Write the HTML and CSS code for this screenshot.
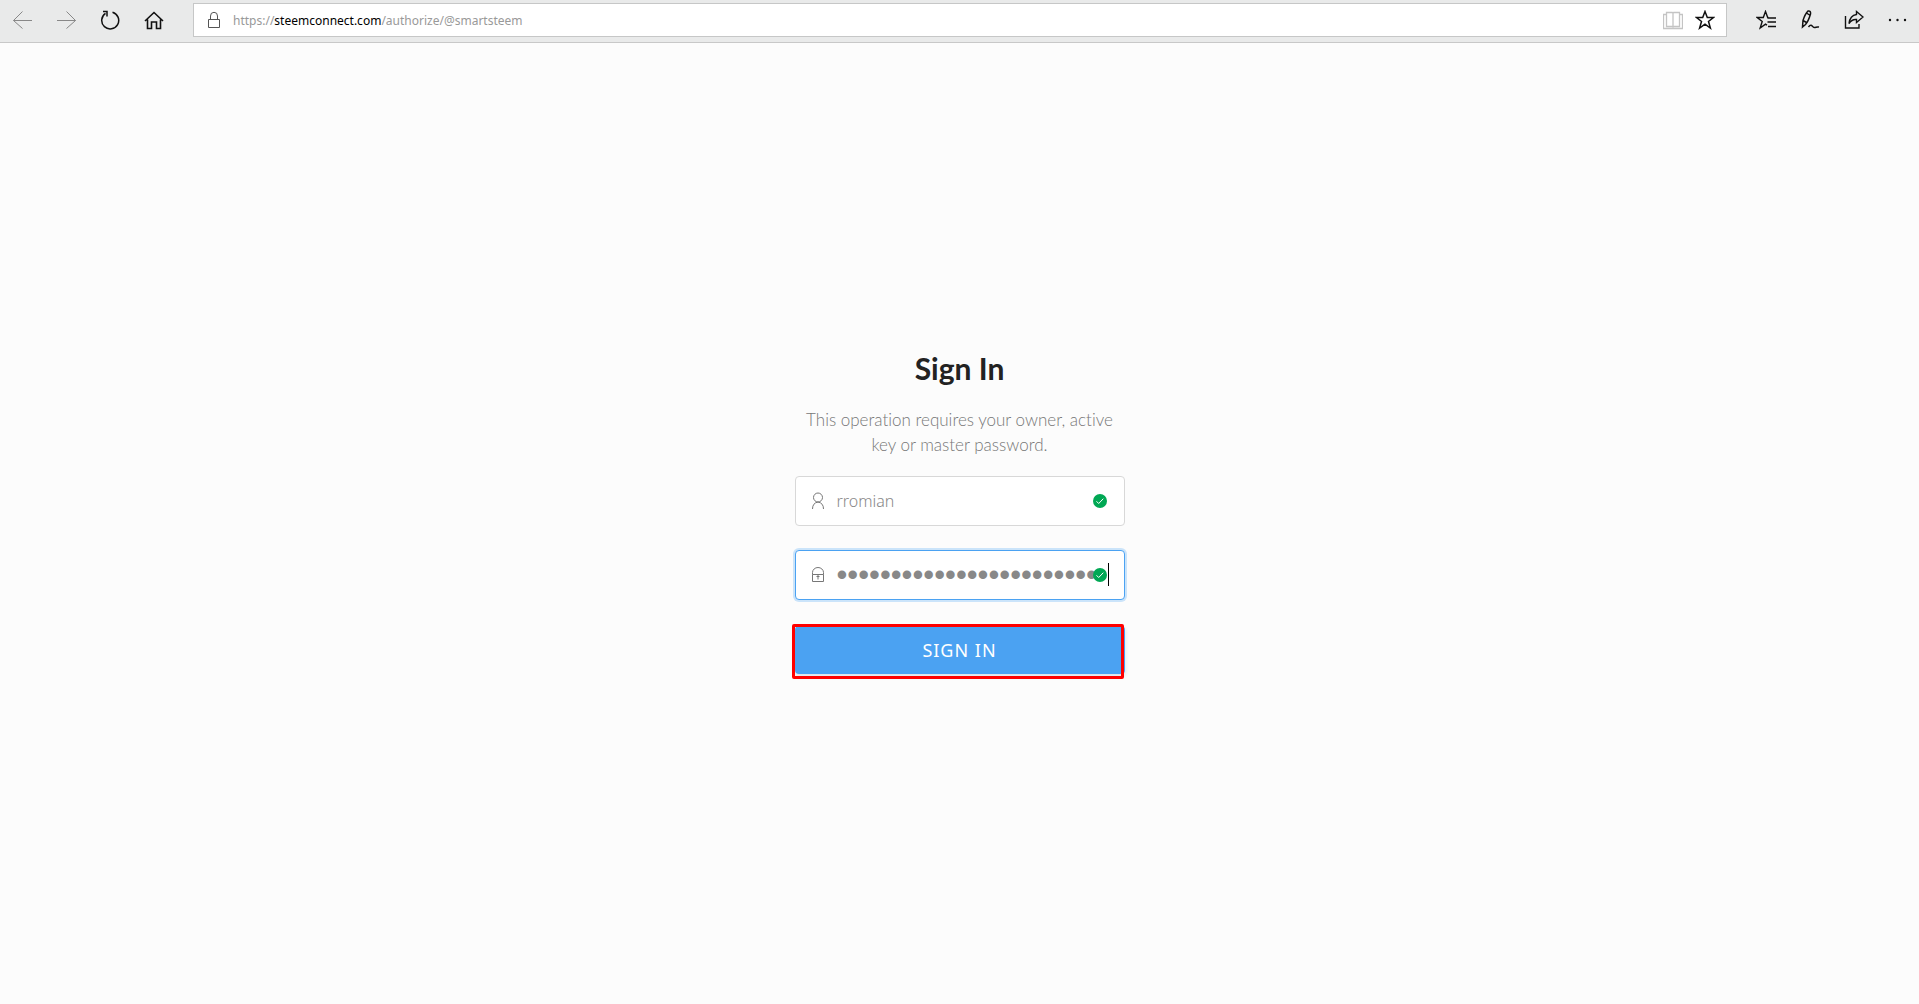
FILE: index.html
```html
<!DOCTYPE html>
<html lang="en">
<head>
    <meta charset="UTF-8">
    <meta name="viewport" content="width=device-width, initial-scale=1.0">
    <title>Sign In</title>
    <link rel="stylesheet" href="styles.css">
</head>
<body>
    <header class="toolbar">
        <nav class="nav-buttons">
            <button class="tool disabled" aria-label="Back">
                <svg viewBox="0 0 20 20"><path d="M20 10.5H1.5M10.5 1.5L1.5 10.5l9 8"/></svg>
            </button>
            <button class="tool disabled" aria-label="Forward">
                <svg viewBox="0 0 20 20"><path d="M1 10.5H19.5M10.5 1.5l9 9-9 8"/></svg>
            </button>
            <button class="tool" aria-label="Refresh">
                <svg viewBox="0 0 20 20"><path d="M12.5 2.2A8.5 8.5 0 1 1 5.5 3.3M3 1.5h4v5" stroke-width="1.5"/></svg>
            </button>
            <button class="tool" aria-label="Home">
                <svg viewBox="0 0 20 20"><path d="M1 11l9-8.5L19 11M3.5 9.5V18.5h4V12h5v6.5h4V9.5" stroke-width="1.6"/></svg>
            </button>
        </nav>

        <div class="address-bar">
            <svg class="address-lock" viewBox="0 0 14 18"><path d="M1.5 8.5h11v8h-11zM3.5 8.5V5a3.5 3.7 0 0 1 7 0v3.5"/></svg>
            <a class="url" href="#">https://<span class="domain">steemconnect.com</span>/authorize/@smartsteem</a>
            <button class="tool faded" aria-label="Reading view">
                <svg viewBox="0 0 20 20"><path d="M3.5 2.5h6q.5 0 .5 1q0-1 .5-1h6v14h-5.5q-1 0-1 1q0-1-1-1h-5.5zM10 3.5v14M3.5 4.5h-3v14h19v-14h-3" stroke-width="1.3"/></svg>
            </button>
            <button class="tool" aria-label="Add to favorites">
                <svg viewBox="0 0 20 20"><path d="M10 1.5l2.3 6h6.2l-5 4 1.9 6.5-5.4-3.9L4.6 18l1.9-6.5-5-4h6.2z" stroke-width="1.5"/></svg>
            </button>
        </div>

        <div class="menu-buttons">
            <button class="tool" aria-label="Favorites">
                <svg viewBox="0 0 20 20"><path d="M12.5 7.5h-.8L9.5 1.5l-2.2 6H1.2l5 4-2 6.5 5.3-3.9 1.5 1M11.5 8h8.5M11.5 12h8.5M12 16.5h8" stroke-width="1.4"/></svg>
            </button>
            <button class="tool" aria-label="Make a web note">
                <svg viewBox="0 0 20 20"><path d="M2.5 17L3 10.5Q5 4 8 1q3-.5 2.5 3Q8.5 11 5.5 14.5zM6.5 3l3 2M3 10.5l3.5 2M8.5 17c3-4 4 .5 6 .5 1.5 0 2-1 4.5-.5" stroke-width="1.5"/></svg>
            </button>
            <button class="tool" aria-label="Share">
                <svg viewBox="0 0 20 20"><path d="M1.5 6v12h13.5v-4M12.5 1.5L19 7l-6.5 5.5V9.5Q8 9 5 13.5 6 5.5 12.5 4.5z" stroke-width="1.4"/></svg>
            </button>
            <button class="tool" aria-label="More">
                <svg viewBox="0 0 20 20"><g class="dots"><circle cx="2" cy="10" r="1.2"/><circle cx="9.5" cy="10" r="1.2"/><circle cx="17" cy="10" r="1.2"/></g></svg>
            </button>
        </div>
    </header>

    <main>
        <form class="sign-in">
            <h1>Sign In</h1>
            <p>This operation requires your owner, active key or master password.</p>

            <div class="field">
                <svg class="field-icon" viewBox="0 0 14 18"><circle cx="7" cy="5.5" r="4.5"/><path d="M1.5 17q0-6 5.5-7 5.5 1 5.5 7"/></svg>
                <input type="text" aria-label="Username" value="rromian">
                <svg class="field-check" viewBox="0 0 14 14"><circle cx="7" cy="7" r="7"/><path d="M3.5 7.3l2.2 2.2 4.6-4.8"/></svg>
            </div>

            <div class="field focused">
                <svg class="field-icon" viewBox="0 0 14 18"><path d="M1.5 8.5h11v7h-11zM1.5 8.5V6.5a5.5 5 0 0 1 11 0v2M7 9v4.5M5.5 10.5h3"/></svg>
                <input type="password" aria-label="Password" value="abcdefghijklmnopqrstuvwx">
                <svg class="field-check" viewBox="0 0 14 14"><circle cx="7" cy="7" r="7"/><path d="M3.5 7.3l2.2 2.2 4.6-4.8"/></svg>
                <span class="caret"></span>
            </div>

            <div class="submit">
                <button type="submit">SIGN IN</button>
                <span class="highlight"></span>
            </div>
        </form>
    </main>
</body>
</html>
```
FILE: styles.css
```css
* {
    box-sizing: border-box;
}

body {
    margin: 0;
    min-height: 100vh;
    display: flex;
    flex-direction: column;
    background: #fcfcfc;
    font-family: "Noto Sans", sans-serif;
}

svg {
    fill: none;
    stroke: currentColor;
}

button {
    padding: 0;
    border: 0;
    cursor: pointer;
}

/* browser toolbar */
.toolbar {
    display: flex;
    align-items: flex-start;
    height: 43px;
    padding: 3px 11px 0 12px;
    background: #e9eaea;
    border-bottom: 1px solid #c8c8c8;
}

.nav-buttons,
.menu-buttons {
    display: flex;
    align-items: center;
    gap: 24px;
    height: 34px;
}

.nav-buttons {
    width: 181px;
}

.menu-buttons {
    margin-left: 29px;
}

.tool {
    width: 20px;
    height: 20px;
    background: none;
    color: #111;
}

.tool svg {
    display: block;
    width: 20px;
    height: 20px;
}

.disabled {
    color: #888;
}

.faded {
    color: #c4c4c4;
}

.dots {
    fill: currentColor;
    stroke: none;
}

.address-bar {
    flex: 1;
    display: flex;
    align-items: center;
    gap: 12px;
    height: 34px;
    padding: 0 11px 0 13px;
    background: #fff;
    border: 1px solid #c6c7c7;
}

.address-lock {
    width: 14px;
    height: 18px;
    color: #555;
}

.url {
    flex: 1;
    font-size: 12px;
    color: #999;
    text-decoration: none;
}

.domain {
    color: #000;
}

/* sign in form */
main {
    flex: 1;
    display: flex;
    justify-content: center;
    align-items: center;
    padding-bottom: 26px;
}

.sign-in {
    width: 330px;
    text-align: center;
}

h1 {
    margin: 0 0 19px;
    font-family: Lato, sans-serif;
    font-size: 30px;
    font-weight: 700;
    line-height: 40px;
    color: #222;
}

p {
    margin: 0 0 19px;
    font-family: Lato, sans-serif;
    font-size: 17px;
    font-weight: 300;
    font-variant-ligatures: none;
    line-height: 25px;
    color: #777;
}

.field {
    position: relative;
    display: flex;
    align-items: center;
    gap: 12px;
    height: 50px;
    margin-bottom: 24px;
    padding: 0 16px 0 15px;
    background: #fff;
    border: 1px solid #d8d8d8;
    border-radius: 4px;
}

.focused {
    border-color: #4ba2f2;
    box-shadow: 0 0 0 2px #cbe4fa;
}

.field-icon {
    width: 14px;
    height: 18px;
    color: #777;
}

.field input {
    flex: 1;
    min-width: 0;
    padding: 0;
    border: 0;
    outline: 0;
    background: none;
    font-family: "Noto Sans", sans-serif;
    font-size: 16px;
    font-weight: 300;
    color: #888;
}

.field input[type="password"] {
    font-family: "Liberation Sans", sans-serif;
    font-size: 31px;
}

.field-check {
    position: absolute;
    top: 17px;
    right: 17px;
    width: 14px;
    height: 14px;
}

.field-check circle {
    fill: #00a854;
    stroke: none;
}

.field-check path {
    stroke: #fff;
}

.caret {
    position: absolute;
    top: 12px;
    right: 15px;
    width: 1px;
    height: 23px;
    background: #000;
}

.submit {
    position: relative;
    margin-top: 26px;
}

.submit button {
    display: block;
    width: 100%;
    height: 48px;
    border-radius: 4px;
    background: #4ba2f2;
    box-shadow: 0 2px 4px #d5dde6;
    color: #fff;
    font-family: "Noto Sans", sans-serif;
    font-size: 18px;
    letter-spacing: 1px;
}

/* red frame drawn over the button */
.highlight {
    position: absolute;
    inset: -2px 1px -5px -3px;
    border: 3px solid #f00;
    border-radius: 2px;
    pointer-events: none;
}
```
